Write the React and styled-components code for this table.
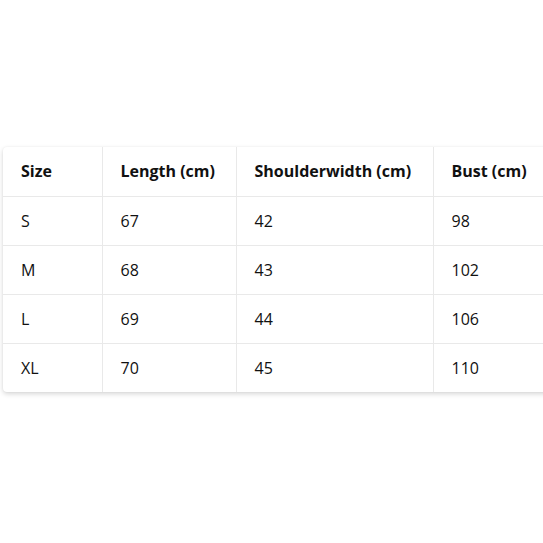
import React from 'react'
import styled, { createGlobalStyle } from 'styled-components'

const GlobalStyle = createGlobalStyle`
  body {
    margin: 0;
    background: #fff;
    font-family: "Open Sans", "Noto Sans", sans-serif;
    overflow: hidden;
  }
`

const Page = styled.div`
  padding: 147px 0 20px 3px;
  width: 540px;
  overflow: hidden;
`

const Card = styled.div`
  width: 580px;
  background: #fff;
  border-radius: 4px;
  box-shadow: 0 2px 5px rgba(0, 0, 0, 0.16), 0 0 2px rgba(0, 0, 0, 0.06);
`

const Table = styled.table`
  width: 100%;
  border-collapse: collapse;
  table-layout: fixed;
  color: #111;
  font-size: 16px;
`

const Cell = styled.td`
  height: 49px;
  padding: 0 18px;
  box-sizing: border-box;
  border-right: 1px solid #e9e9e9;
  border-bottom: 1px solid #e9e9e9;
  font-weight: ${(p) => (p.$head ? 700 : 400)};
  text-align: left;
  white-space: nowrap;
  &:last-child {
    border-right: none;
  }
  tr:last-child > & {
    border-bottom: none;
  }
`

const widths = [99, 134, 197, 150]
const header = ['Size', 'Length (cm)', 'Shoulderwidth (cm)', 'Bust (cm)']
const rows = [
  ['S', '67', '42', '98'],
  ['M', '68', '43', '102'],
  ['L', '69', '44', '106'],
  ['XL', '70', '45', '110'],
]

export default function App() {
  return (
    <>
      <GlobalStyle />
      <Page>
        <Card>
          <Table>
            <colgroup>
              {widths.map((w, i) => (
                <col key={i} style={{ width: w }} />
              ))}
            </colgroup>
            <tbody>
              <tr>
                {header.map((h) => (
                  <Cell as="th" key={h} $head>
                    {h}
                  </Cell>
                ))}
              </tr>
              {rows.map((r) => (
                <tr key={r[0]}>
                  {r.map((c, i) => (
                    <Cell key={i}>{c}</Cell>
                  ))}
                </tr>
              ))}
            </tbody>
          </Table>
        </Card>
      </Page>
    </>
  )
}
